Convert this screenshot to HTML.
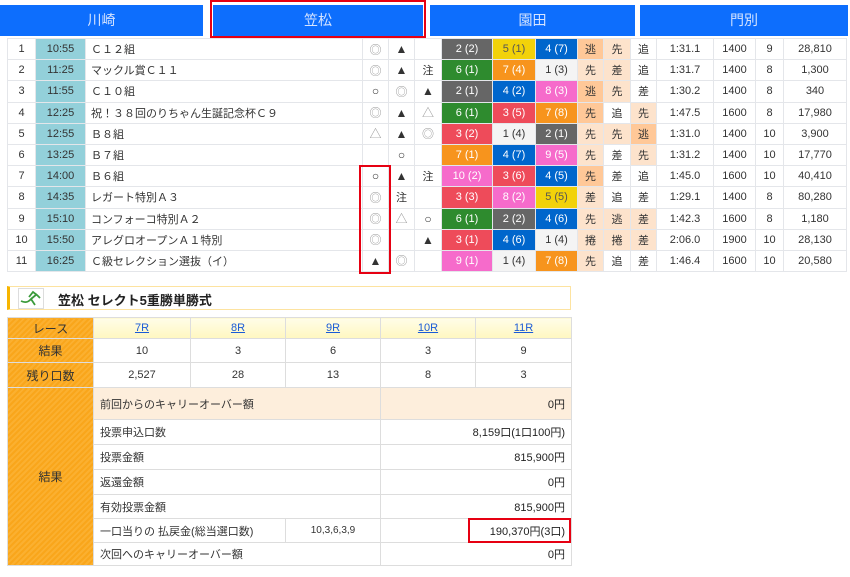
<!DOCTYPE html>
<html><head><meta charset="utf-8"><style>
*{box-sizing:border-box;margin:0;padding:0}
body{width:850px;height:577px;background:#fff;font-family:"Liberation Sans","Noto Sans CJK JP",sans-serif;color:#333;position:relative;overflow:hidden}
.tab{position:absolute;top:5px;height:31px;background:#0d6efd;color:#d6e4ff;font-size:14px;font-weight:normal;text-align:center;line-height:31px}
table{border-collapse:collapse;table-layout:fixed;position:absolute}
#t td{border:1px solid #e4e6ea;height:21.2px;font-size:11px;text-align:center;padding:0;white-space:nowrap}
#t td.nm{text-align:left;padding-left:5px;font-size:11px}
#t td.tm{background:#93d0da;color:#333}
#t td.sy{font-size:12px}
.g{background:#666;color:#fff}.y{background:#f2d20a;color:#555}.b{background:#0066cc;color:#fff}.gr{background:#2e8b2e;color:#fff}
.o{background:#f7941d;color:#fff}.p{background:#f66bcb;color:#fff}.r{background:#ee4b5a;color:#fff}.w{background:#f4f4f4;color:#333}
.d{background:#ffc898}.l{background:#fde3cc}
.mk{color:#999}
.redbox{position:absolute;border:2px solid #e60012}
#s td{border:1px solid #ddd;font-size:11px;text-align:center;color:#333}
#s td.lb{background:repeating-linear-gradient(135deg,#f9a61b 0 2px,#fbb030 2px 4px);color:#333;font-size:12px}
#s td.hd{background:linear-gradient(#fffde8,#fff7c0)}
#s td.hd a{color:#1a5bd6;text-decoration:underline}
#s td.ds{text-align:left;padding-left:6px;font-size:11px}
#s td.v{text-align:right;padding-right:6px;color:#222}
</style></head><body>
<div class="tab" style="left:0;width:203px">川崎</div>
<div class="tab" style="left:213px;width:210px">笠松</div>
<div class="tab" style="left:430px;width:205px">園田</div>
<div class="tab" style="left:640px;width:208px">門別</div>
<div class="redbox" style="left:210px;top:0;width:216px;height:38px"></div>

<table id="t" style="left:7px;top:38px;width:839px">
<colgroup><col style="width:28px"><col style="width:50px"><col style="width:277px"><col style="width:26px"><col style="width:26px"><col style="width:27px"><col style="width:51px"><col style="width:43px"><col style="width:42px"><col style="width:26px"><col style="width:27px"><col style="width:26px"><col style="width:57px"><col style="width:42px"><col style="width:28px"><col style="width:63px"></colgroup>
<tr><td>1</td><td class="tm">10:55</td><td class="nm">Ｃ１２組</td><td class="mk sy">◎</td><td class="sy">▲</td><td></td><td class="g">2 (2)</td><td class="y">5 (1)</td><td class="b">4 (7)</td><td class="d">逃</td><td class="l">先</td><td>追</td><td>1:31.1</td><td>1400</td><td>9</td><td>28,810</td></tr>
<tr><td>2</td><td class="tm">11:25</td><td class="nm">マックル賞Ｃ１１</td><td class="mk sy">◎</td><td class="sy">▲</td><td>注</td><td class="gr">6 (1)</td><td class="o">7 (4)</td><td class="w">1 (3)</td><td class="l">先</td><td class="l">差</td><td>追</td><td>1:31.7</td><td>1400</td><td>8</td><td>1,300</td></tr>
<tr><td>3</td><td class="tm">11:55</td><td class="nm">Ｃ１０組</td><td class="sy">○</td><td class="mk sy">◎</td><td class="sy">▲</td><td class="g">2 (1)</td><td class="b">4 (2)</td><td class="p">8 (3)</td><td class="d">逃</td><td class="l">先</td><td>差</td><td>1:30.2</td><td>1400</td><td>8</td><td>340</td></tr>
<tr><td>4</td><td class="tm">12:25</td><td class="nm">祝！３８回のりちゃん生誕記念杯Ｃ９</td><td class="mk sy">◎</td><td class="sy">▲</td><td class="mk sy">△</td><td class="gr">6 (1)</td><td class="r">3 (5)</td><td class="o">7 (8)</td><td class="d">先</td><td>追</td><td class="l">先</td><td>1:47.5</td><td>1600</td><td>8</td><td>17,980</td></tr>
<tr><td>5</td><td class="tm">12:55</td><td class="nm">Ｂ８組</td><td class="mk sy">△</td><td class="sy">▲</td><td class="mk sy">◎</td><td class="r">3 (2)</td><td class="w">1 (4)</td><td class="g">2 (1)</td><td class="l">先</td><td class="l">先</td><td class="d">逃</td><td>1:31.0</td><td>1400</td><td>10</td><td>3,900</td></tr>
<tr><td>6</td><td class="tm">13:25</td><td class="nm">Ｂ７組</td><td></td><td class="sy">○</td><td></td><td class="o">7 (1)</td><td class="b">4 (7)</td><td class="p">9 (5)</td><td class="l">先</td><td>差</td><td class="l">先</td><td>1:31.2</td><td>1400</td><td>10</td><td>17,770</td></tr>
<tr><td>7</td><td class="tm">14:00</td><td class="nm">Ｂ６組</td><td class="sy">○</td><td class="sy">▲</td><td>注</td><td class="p">10 (2)</td><td class="r">3 (6)</td><td class="b">4 (5)</td><td class="d">先</td><td>差</td><td>追</td><td>1:45.0</td><td>1600</td><td>10</td><td>40,410</td></tr>
<tr><td>8</td><td class="tm">14:35</td><td class="nm">レガート特別Ａ３</td><td class="mk sy">◎</td><td>注</td><td></td><td class="r">3 (3)</td><td class="p">8 (2)</td><td class="y">5 (5)</td><td class="l">差</td><td>追</td><td>差</td><td>1:29.1</td><td>1400</td><td>8</td><td>80,280</td></tr>
<tr><td>9</td><td class="tm">15:10</td><td class="nm">コンフォーコ特別Ａ２</td><td class="mk sy">◎</td><td class="mk sy">△</td><td class="sy">○</td><td class="gr">6 (1)</td><td class="g">2 (2)</td><td class="b">4 (6)</td><td class="l">先</td><td class="l">逃</td><td class="l">差</td><td>1:42.3</td><td>1600</td><td>8</td><td>1,180</td></tr>
<tr><td>10</td><td class="tm">15:50</td><td class="nm">アレグロオープンＡ１特別</td><td class="mk sy">◎</td><td></td><td class="sy">▲</td><td class="r">3 (1)</td><td class="b">4 (6)</td><td class="w">1 (4)</td><td class="l">捲</td><td class="l">捲</td><td class="l">差</td><td>2:06.0</td><td>1900</td><td>10</td><td>28,130</td></tr>
<tr><td>11</td><td class="tm">16:25</td><td class="nm">Ｃ級セレクション選抜（イ）</td><td class="sy">▲</td><td class="mk sy">◎</td><td></td><td class="p">9 (1)</td><td class="w">1 (4)</td><td class="o">7 (8)</td><td class="l">先</td><td>追</td><td>差</td><td>1:46.4</td><td>1600</td><td>10</td><td>20,580</td></tr>
</table>
<div class="redbox" style="left:359px;top:165px;width:32px;height:109px"></div>

<div style="position:absolute;left:7px;top:286px;width:564px;height:24px;border:1px solid #fde3a0;border-left:3px solid #f7b500;background:#fff">
<div style="position:absolute;left:8px;top:1px;width:26px;height:21px;border:1px solid #ddd;background:#fff">
<svg width="24" height="19" viewBox="0 0 24 19"><path d="M2 12 Q8 15 12 10 L16 16 M12 10 L18 5 M10 8 L14 3 L18 6 L21 9" stroke="#3a9a3a" stroke-width="1.8" fill="none"/></svg></div>
<div style="position:absolute;left:48px;top:3px;font-size:13px;font-weight:bold;color:#222">笠松 セレクト5重勝単勝式</div>
</div>

<table id="s" style="left:7px;top:317px;width:564px">
<colgroup><col style="width:86px"><col style="width:97px"><col style="width:95px"><col style="width:95px"><col style="width:95px"><col style="width:96px"></colgroup>
<tr style="height:21px"><td class="lb">レース</td><td class="hd"><a>7R</a></td><td class="hd"><a>8R</a></td><td class="hd"><a>9R</a></td><td class="hd"><a>10R</a></td><td class="hd"><a>11R</a></td></tr>
<tr style="height:24px"><td class="lb">結果</td><td>10</td><td>3</td><td>6</td><td>3</td><td>9</td></tr>
<tr style="height:25px"><td class="lb">残り口数</td><td>2,527</td><td>28</td><td>13</td><td>8</td><td>3</td></tr>
<tr style="height:32px;background:#fdeedc"><td class="lb" rowspan="7">結果</td><td class="ds" colspan="3">前回からのキャリーオーバー額</td><td class="v" colspan="2">0円</td></tr>
<tr style="height:25px"><td class="ds" colspan="3">投票申込口数</td><td class="v" colspan="2">8,159口(1口100円)</td></tr>
<tr style="height:25px"><td class="ds" colspan="3">投票金額</td><td class="v" colspan="2">815,900円</td></tr>
<tr style="height:25px"><td class="ds" colspan="3">返還金額</td><td class="v" colspan="2">0円</td></tr>
<tr style="height:24px"><td class="ds" colspan="3">有効投票金額</td><td class="v" colspan="2">815,900円</td></tr>
<tr style="height:24px"><td class="ds" colspan="2">一口当りの 払戻金(総当選口数)</td><td style="font-size:10px">10,3,6,3,9</td><td class="v" colspan="2">190,370円(3口)</td></tr>
<tr style="height:23px"><td class="ds" colspan="3">次回へのキャリーオーバー額</td><td class="v" colspan="2">0円</td></tr>
</table>
<div class="redbox" style="left:468px;top:518px;width:103px;height:25px"></div>
</body></html>
